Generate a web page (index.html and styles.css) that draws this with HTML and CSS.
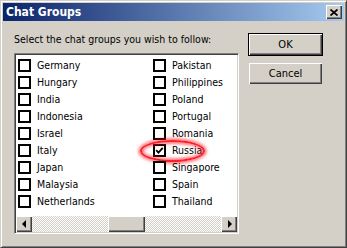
FILE: index.html
```html
<!DOCTYPE html>
<html lang="en">
<head>
    <meta charset="UTF-8">
    <title>Chat Groups</title>
    <link rel="stylesheet" href="styles.css">
</head>
<body>
    <div class="window">
        <div class="titlebar">
            <span class="title">Chat Groups</span>
            <button class="close" aria-label="Close">
                <svg width="8" height="7" viewBox="0 0 8 7"><path d="M0.5 0.5 L7.5 6.5 M7.5 0.5 L0.5 6.5" stroke="#000" stroke-width="1.7" fill="none"/></svg>
            </button>
        </div>
        <div class="body">
            <div class="main">
                <p class="prompt">Select the chat groups you wish to follow:</p>
                <div class="listbox">
                    <ul class="items">
                        <li class="item"><span class="check"></span>Germany</li>
                        <li class="item"><span class="check"></span>Hungary</li>
                        <li class="item"><span class="check"></span>India</li>
                        <li class="item"><span class="check"></span>Indonesia</li>
                        <li class="item"><span class="check"></span>Israel</li>
                        <li class="item"><span class="check"></span>Italy</li>
                        <li class="item"><span class="check"></span>Japan</li>
                        <li class="item"><span class="check"></span>Malaysia</li>
                        <li class="item"><span class="check"></span>Netherlands</li>
                        <li class="item"><span class="check"></span>Pakistan</li>
                        <li class="item"><span class="check"></span>Philippines</li>
                        <li class="item"><span class="check"></span>Poland</li>
                        <li class="item"><span class="check"></span>Portugal</li>
                        <li class="item"><span class="check"></span>Romania</li>
                        <li class="item marked">
                            <span class="check"><svg width="9" height="9" viewBox="0 0 9 9"><polyline points="1.2,4.2 3.4,6.6 7.8,1.8" stroke="#000" stroke-width="1.8" fill="none"/></svg></span>Russia
                            <span class="ring"></span>
                        </li>
                        <li class="item"><span class="check"></span>Singapore</li>
                        <li class="item"><span class="check"></span>Spain</li>
                        <li class="item"><span class="check"></span>Thailand</li>
                    </ul>
                    <div class="hscroll">
                        <span class="arrow left"></span>
                        <div class="track"><span class="thumb"></span></div>
                        <span class="arrow right"></span>
                    </div>
                </div>
            </div>
            <div class="actions">
                <button class="btn default">OK</button>
                <button class="btn">Cancel</button>
            </div>
        </div>
    </div>
</body>
</html>
```

FILE: styles.css
```css
/* Classic dialog */
* {
    box-sizing: border-box;
}
html, body {
    margin: 0;
    padding: 0;
}
body {
    width: 347px;
    height: 248px;
    overflow: hidden;
    font-family: "DejaVu Sans Condensed", "Liberation Sans", sans-serif;
    font-size: 10.5px;
    color: #000;
}
.window {
    width: 347px;
    height: 248px;
    background-color: #d4d0c8;
    border: 1px solid;
    border-color: #d4d0c8 #404040 #404040 #d4d0c8;
    box-shadow: inset 1px 1px #fff, inset -1px -1px #808080;
    padding: 2px;
}

/* Title bar */
.titlebar {
    height: 18px;
    display: flex;
    align-items: center;
    justify-content: space-between;
    padding: 0 2px 0 2px;
    background: linear-gradient(to right, #0a246a, #a6caf0);
}
.title {
    color: #fff;
    font-weight: bold;
    font-size: 12px;
    padding-left: 1px;
}
.close {
    width: 16px;
    height: 14px;
    padding: 0;
    border: none;
    background-color: #d4d0c8;
    box-shadow: inset 1px 1px #fff, inset -1px -1px #404040, inset -2px -2px #808080;
    display: flex;
    align-items: center;
    justify-content: center;
}

/* Content */
.body {
    display: flex;
    gap: 9px;
    padding: 12px 0 0 11px;
}
.prompt {
    margin: 0 0 7px;
    height: 13px;
    line-height: 13px;
}
.listbox {
    width: 225px;
    height: 181px;
    border: 1px solid;
    border-color: #808080 #fff #fff #808080;
    box-shadow: inset 1px 1px #404040, inset -1px -1px #d4d0c8;
    padding: 1px;
    background-color: #fff;
    display: flex;
    flex-direction: column;
}
.items {
    flex: 1;
    margin: 0;
    padding: 2px 0 0 2px;
    list-style: none;
    display: grid;
    grid-auto-flow: column;
    grid-template-rows: repeat(9, 17px);
    grid-template-columns: 135px 135px;
    overflow: hidden;
}
.item {
    position: relative;
    display: flex;
    align-items: center;
    gap: 6px;
    white-space: nowrap;
    line-height: 17px;
}
.check {
    width: 13px;
    height: 13px;
    border: 2px solid #000;
    background-color: #fff;
    display: flex;
    align-items: center;
    justify-content: center;
}
.ring {
    position: absolute;
    left: -13px;
    top: -2px;
    width: 65px;
    height: 22px;
    border-radius: 50%;
    border: 2px solid rgba(250, 20, 30, 0.95);
    box-shadow: 0 0 3px 2px rgba(255, 20, 30, 0.55), inset 0 0 3px 2px rgba(255, 20, 30, 0.55);
    pointer-events: none;
}

/* Horizontal scrollbar */
.hscroll {
    height: 16px;
    display: flex;
}
.arrow, .thumb {
    background-color: #d4d0c8;
    box-shadow: inset 1px 1px #fff, inset -1px -1px #404040, inset -2px -2px #808080;
}
.arrow {
    width: 16px;
    height: 16px;
    display: flex;
    align-items: center;
    justify-content: center;
}
.arrow::before {
    content: "";
    border-top: 4px solid transparent;
    border-bottom: 4px solid transparent;
}
.arrow.left::before {
    border-right: 4px solid #000;
    margin-left: -1px;
}
.arrow.right::before {
    border-left: 4px solid #000;
    margin-left: 1px;
}
.track {
    flex: 1;
    display: flex;
    background: repeating-conic-gradient(#d4d0c8 0 25%, #fff 0 50%) 0 0 / 2px 2px;
}
.thumb {
    width: 37px;
    height: 16px;
    margin-left: 76px;
}

/* Buttons */
.actions {
    display: flex;
    flex-direction: column;
    gap: 6px;
    width: 75px;
}
.btn {
    width: 73px;
    height: 21px;
    margin: 1px;
    padding: 0;
    border: none;
    background-color: #d4d0c8;
    font-family: inherit;
    font-size: 11px;
    color: #000;
    box-shadow: inset 1px 1px #fff, inset -1px -1px #404040, inset -2px -2px #808080;
}
.btn.default {
    outline: 1px solid #000;
}
```
